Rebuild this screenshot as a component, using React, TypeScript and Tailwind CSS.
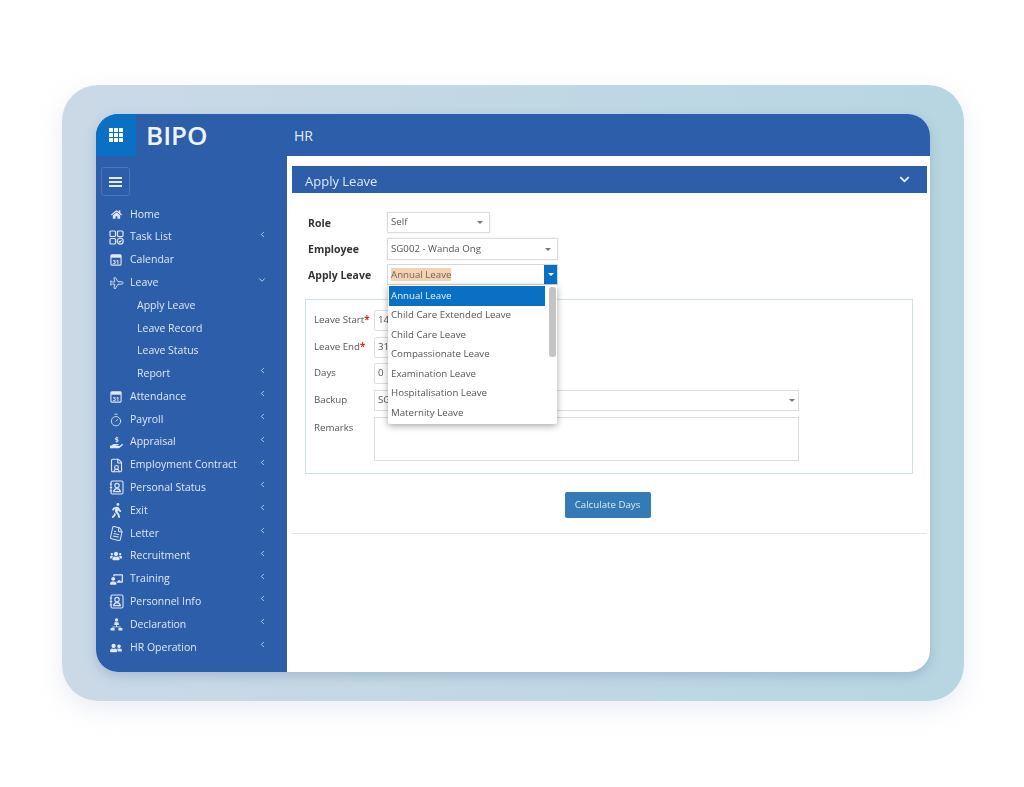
import React from 'react';
import { ChevronLeft, ChevronDown, Plane, Timer, FileUser, FileText } from 'lucide-react';
import { FaHome, FaHandHoldingUsd, FaWalking, FaUsers, FaUserFriends, FaChalkboardTeacher, FaChevronDown } from 'react-icons/fa';

const font = { fontFamily: '"Open Sans", "Noto Sans", sans-serif' };

const TaskIcon = () => (
  <svg width="15" height="15" viewBox="0 0 15 15" fill="none" stroke="currentColor" strokeWidth="1.2">
    <rect x="1" y="1" width="5.5" height="5.5" rx="1" />
    <rect x="8.5" y="1" width="5.5" height="5.5" rx="1" />
    <rect x="1" y="8.5" width="5.5" height="5.5" rx="1" />
    <circle cx="11.2" cy="11.2" r="3" />
    <path d="M9.8 11.2l1 1 1.8-1.8" />
  </svg>
);

const CalendarIcon = () => (
  <svg width="12" height="12" viewBox="0 0 13 13">
    <rect x="1" y="1" width="11" height="11" rx="1" fill="none" stroke="currentColor" strokeWidth="1.2" />
    <rect x="1" y="1" width="11" height="3" fill="currentColor" />
    <text x="6.5" y="10.5" textAnchor="middle" fontSize="6" fontWeight="700" fill="currentColor" style={font}>31</text>
  </svg>
);

// address book with a person, tabs on the left edge
const ContactIcon = () => (
  <svg width="15" height="15" viewBox="0 0 15 15" fill="none" stroke="currentColor" strokeWidth="1.1">
    <rect x="2" y="1" width="12" height="13" rx="1.5" />
    <path d="M.8 4h2.4M.8 7.5h2.4M.8 11h2.4" />
    <circle cx="8" cy="5.6" r="2.2" />
    <path d="M4.6 11.6c.4-2 1.8-3 3.4-3s3 1 3.4 3z" />
  </svg>
);

const DeclarationIcon = () => (
  <svg width="13" height="13" viewBox="0 0 13 13" fill="currentColor">
    <circle cx="6.5" cy="2" r="1.7" />
    <path d="M4.6 4.3h3.8l.5 2.8H4.1z" />
    <rect x="6.1" y="6.8" width="0.8" height="2" />
    <path d="M2.5 8.4h8v1.6h-.8v-.8H3.3v.8h-.8z" />
    <rect x="0.6" y="10" width="4" height="2.6" rx="0.4" />
    <rect x="8.4" y="10" width="4" height="2.6" rx="0.4" />
  </svg>
);

const s = 'text-[#dfe8f5]';

const menu = [
  { label: 'Home', icon: <FaHome size={11} />, arrow: '' },
  { label: 'Task List', icon: <TaskIcon />, arrow: 'left' },
  { label: 'Calendar', icon: <CalendarIcon />, arrow: '' },
  { label: 'Leave', icon: <Plane size={14} strokeWidth={1.5} className="rotate-45" />, arrow: 'down' },
  { label: 'Apply Leave', sub: true, arrow: '' },
  { label: 'Leave Record', sub: true, arrow: '' },
  { label: 'Leave Status', sub: true, arrow: '' },
  { label: 'Report', sub: true, arrow: 'left' },
  { label: 'Attendance', icon: <CalendarIcon />, arrow: 'left' },
  { label: 'Payroll', icon: <Timer size={14} strokeWidth={1.5} />, arrow: 'left' },
  { label: 'Appraisal', icon: <FaHandHoldingUsd size={13} />, arrow: 'left' },
  { label: 'Employment Contract', icon: <FileUser size={15} strokeWidth={1.8} />, arrow: 'left' },
  { label: 'Personal Status', icon: <ContactIcon />, arrow: 'left' },
  { label: 'Exit', icon: <FaWalking size={15} />, arrow: 'left' },
  { label: 'Letter', icon: <FileText size={15} strokeWidth={1.6} className="rotate-12" />, arrow: 'left' },
  { label: 'Recruitment', icon: <FaUsers size={12} />, arrow: 'left' },
  { label: 'Training', icon: <FaChalkboardTeacher size={13} />, arrow: 'left' },
  { label: 'Personnel Info', icon: <ContactIcon />, arrow: 'left' },
  { label: 'Declaration', icon: <DeclarationIcon />, arrow: 'left' },
  { label: 'HR Operation', icon: <FaUserFriends size={12} />, arrow: 'left' },
];

const options = [
  'Annual Leave',
  'Child Care Extended Leave',
  'Child Care Leave',
  'Compassionate Leave',
  'Examination Leave',
  'Hospitalisation Leave',
  'Maternity Leave',
];

const Caret = () => <span className="w-0 h-0 border-x-[3px] border-x-transparent border-t-[3px] border-t-[#777]" />;

const Sidebar = () => (
  <aside className="w-[191px] shrink-0 bg-[#2c5eaa] flex flex-col">
    <div className="ml-[5px] mt-[11px] w-[29px] h-[29px] rounded-[3px] border border-[#4a78bb] flex items-center justify-center">
      <span className="flex flex-col gap-[2px] w-[13px]">
        <span className="h-[2px] bg-[#e6edf7]" />
        <span className="h-[2px] bg-[#e6edf7]" />
        <span className="h-[2px] bg-[#e6edf7]" />
      </span>
    </div>
    <ul className="mt-[7px]">
      {menu.map((m) => (
        <li key={m.label} className={`h-[22.8px] flex items-center text-[10.5px] ${s}`}>
          {m.sub ? (
            <span className="ml-[41px]">{m.label}</span>
          ) : (
            <>
              <span className="ml-[12px] w-[16px] flex justify-center shrink-0">{m.icon}</span>
              <span className="ml-[6px]">{m.label}</span>
            </>
          )}
          {m.arrow === 'left' && <ChevronLeft size={9} className="absolute left-[162px] -translate-y-[3px]" strokeWidth={2} />}
          {m.arrow === 'down' && <ChevronDown size={10} className="absolute left-[161px] -translate-y-[3px]" strokeWidth={2} />}
        </li>
      ))}
    </ul>
  </aside>
);

const FieldRow = ({ label, req, value, className }: { label: string; req?: boolean; value: string; className?: string }) => (
  <div className={`flex items-center h-[21px] ${className ?? ''}`}>
    <span className="w-[60px] shrink-0 text-[9.7px] text-[#555] whitespace-nowrap">
      {label}
      {req && <span className="text-[#c9302c] font-bold">*</span>}
    </span>
    <span className="w-[120px] h-full border border-[#ddd] rounded-[2px] bg-white px-[3px] text-[9.7px] text-[#555] flex items-center">{value}</span>
  </div>
);

export default function App() {
  return (
    <div className="w-[1024px] h-[787px] bg-white pt-[85px] pl-[62px] overflow-hidden" style={font}>
      <div className="w-[902px] h-[616px] rounded-[36px] bg-gradient-to-r from-[#cbd9e7] to-[#b7d6e2] pt-[29px] pl-[34px] shadow-[0_8px_24px_rgba(170,185,210,0.25)]">
        <div className="relative w-[834px] h-[558px] rounded-[22px] overflow-hidden flex flex-col bg-white shadow-[0_4px_12px_rgba(90,120,160,0.3)] blur-[0.35px]">
          <header className="h-[42px] shrink-0 bg-[#2c5eaa] flex items-center">
            <div className="w-[40px] h-full bg-[#0a70c4] flex items-center justify-center">
              <span className="grid grid-cols-3 gap-[1.5px]">
                {Array.from({ length: 9 }).map((_, i) => (
                  <span key={i} className="w-[3.5px] h-[3.5px] bg-white rounded-[0.5px]" />
                ))}
              </span>
            </div>
            <span className="ml-[10px] w-[148px] text-[26px] leading-none font-semibold text-[#eef3fa]">BIPO</span>
            <span className="text-[14px] text-[#e6edf7]">HR</span>
          </header>
          <div className="flex flex-1 min-h-0 relative">
            <Sidebar />
            <main className="flex-1 pt-[10px] pl-[5px] pr-[3px]">
              <div className="h-[368px] border-b border-[#e3e3e3]">
                <div className="h-[27px] bg-[#2c5eaa] flex items-center justify-between pl-[13px] pr-[17px]">
                  <span className="text-[13px] text-[#dfe8f5] translate-y-[2px]">Apply Leave</span>
                  <FaChevronDown size={11} className="text-[#eef3fa]" />
                </div>
                <div className="pt-[19px] pl-[13px] pr-[14px]">
                  <div className="flex items-center h-[21px]">
                    <span className="w-[82px] pl-[3px] pt-[1px] translate-y-[1px] text-[10.5px] font-bold text-[#333]">Role</span>
                    <span className="w-[103px] h-full border border-[#ddd] shadow-[0_0_2px_rgba(0,0,0,0.1)] px-[3px] text-[9.7px] text-[#555] flex items-center justify-between pr-[6px]">
                      Self <Caret />
                    </span>
                  </div>
                  <div className="flex items-center h-[22px] mt-[5px]">
                    <span className="w-[82px] pl-[3px] pt-[1px] text-[10.5px] font-bold text-[#333]">Employee</span>
                    <span className="w-[171px] h-full border border-[#ddd] shadow-[0_0_2px_rgba(0,0,0,0.1)] px-[3px] text-[9.7px] text-[#555] flex items-center justify-between pr-[6px]">
                      SG002 - Wanda Ong <Caret />
                    </span>
                  </div>
                  <div className="flex items-center h-[21px] mt-[4px] relative z-10">
                    <span className="w-[82px] pl-[3px] pt-[1px] translate-y-[1px] text-[10.5px] font-bold text-[#333]">Apply Leave</span>
                    <div className="relative w-[171px] h-full border border-[#cfd8e3] flex items-center pl-[3px]">
                      <span className="bg-[#f6d2ae] text-[9.7px] text-[#666] leading-[13px]">Annual Leave</span>
                      <span className="absolute right-0 top-0 bottom-0 w-[13px] bg-[#0a70c4] flex items-center justify-center">
                        <span className="w-0 h-0 border-x-[3px] border-x-transparent border-t-[3px] border-t-white" />
                      </span>
                      <div className="absolute left-0 top-[20px] w-[169px] h-[139px] bg-white shadow-[0_2px_7px_rgba(0,0,0,0.35)] rounded-b-[2px] pl-[1px] pt-[1px]">
                        <ul className="w-[156px]">
                          {options.map((o, i) => (
                            <li key={o} className={`h-[19.6px] flex items-center pl-[2px] text-[9.7px] ${i === 0 ? 'bg-[#0a70c4] text-[#e6f0fa]' : 'text-[#555]'}`}>
                              {o}
                            </li>
                          ))}
                        </ul>
                        <span className="absolute right-[1px] top-[2px] w-[7px] h-[70px] rounded-[3px] bg-[#c4c4c4]" />
                      </div>
                    </div>
                  </div>
                  <fieldset className="mt-[14px] h-[175px] border border-[#cfe0ea] pt-[10px] pl-[8px]">
                    <FieldRow label="Leave Start" req value="14" />
                    <FieldRow label="Leave End" req value="31" className="mt-[6px]" />
                    <FieldRow label="Days" value="0" className="mt-[5px]" />
                    <div className="flex items-center h-[21px] mt-[6px]">
                      <span className="w-[60px] shrink-0 text-[9.7px] text-[#555]">Backup</span>
                      <span className="w-[425px] h-full border border-[#ddd] px-[3px] text-[9.7px] text-[#555] flex items-center justify-between pr-[3px]">
                        SG <Caret />
                      </span>
                    </div>
                    <div className="flex mt-[6px]">
                      <span className="w-[60px] shrink-0 text-[9.7px] text-[#555] pt-[4px]">Remarks</span>
                      <span className="w-[425px] h-[44px] border border-[#ddd]" />
                    </div>
                  </fieldset>
                  <div className="flex justify-center mt-[18px] pr-[3px]">
                    <button className="w-[86px] h-[26px] pt-[1px] rounded-[2px] bg-[#337ab7] text-[9.7px] text-[#dcebf7]">Calculate Days</button>
                  </div>
                </div>
              </div>
            </main>
          </div>
        </div>
      </div>
    </div>
  );
}
